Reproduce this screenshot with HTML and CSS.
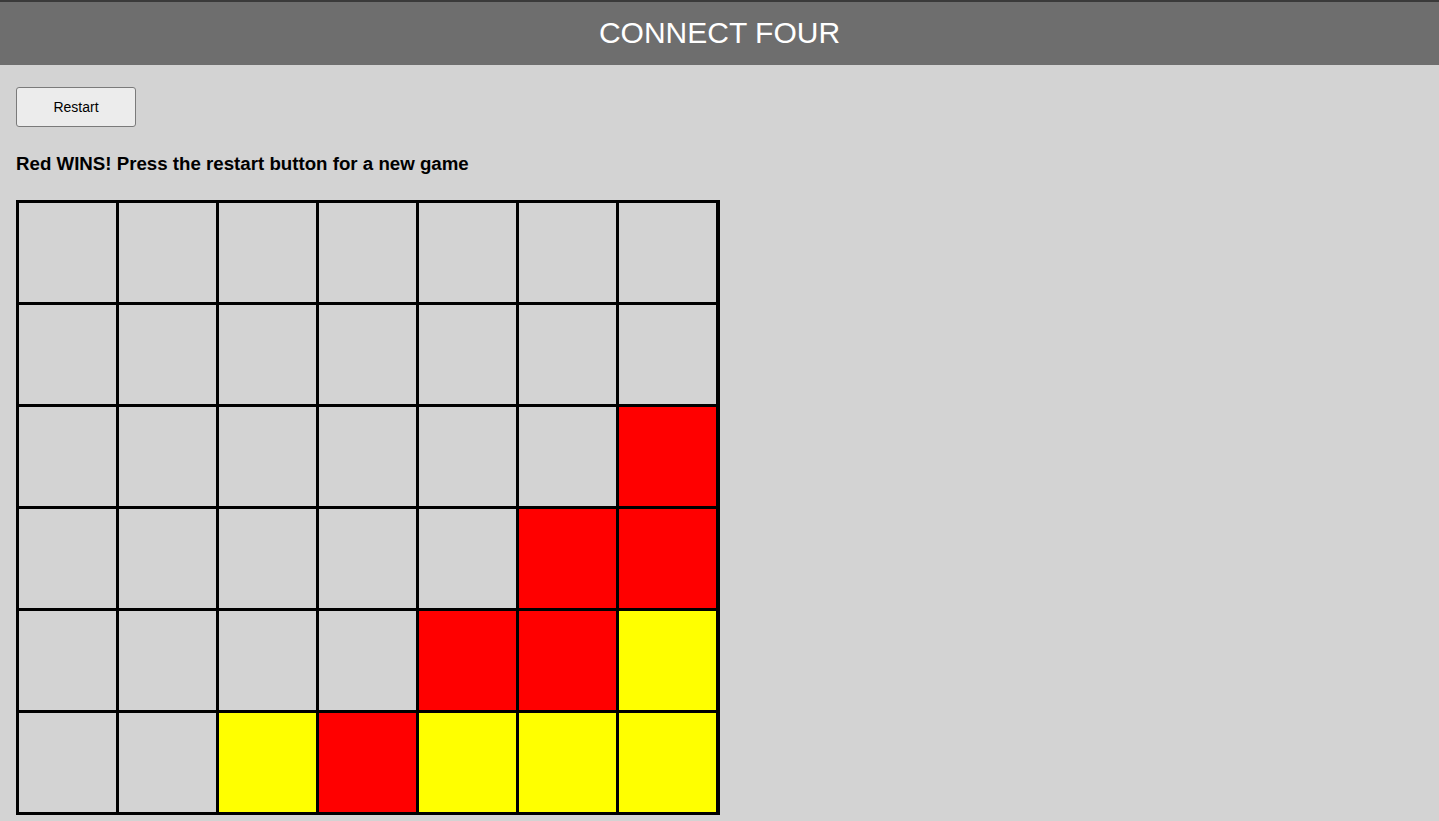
FILE: index.html
```html
<!DOCTYPE html>
<html>
<head>
<meta charset="utf-8">
<title>Connect Four</title>
<link rel="stylesheet" href="styles.css">
</head>
<body>
<header class="top">CONNECT FOUR</header>
<main class="content">
  <button class="restart">Restart</button>
  <p class="status">Red WINS! Press the restart button for a new game</p>
  <div class="board">
    <div class="cell"></div><div class="cell"></div><div class="cell"></div><div class="cell"></div><div class="cell"></div><div class="cell"></div><div class="cell"></div>
    <div class="cell"></div><div class="cell"></div><div class="cell"></div><div class="cell"></div><div class="cell"></div><div class="cell"></div><div class="cell"></div>
    <div class="cell"></div><div class="cell"></div><div class="cell"></div><div class="cell"></div><div class="cell"></div><div class="cell"></div><div class="cell red"></div>
    <div class="cell"></div><div class="cell"></div><div class="cell"></div><div class="cell"></div><div class="cell"></div><div class="cell red"></div><div class="cell red"></div>
    <div class="cell"></div><div class="cell"></div><div class="cell"></div><div class="cell"></div><div class="cell red"></div><div class="cell red"></div><div class="cell yellow"></div>
    <div class="cell"></div><div class="cell"></div><div class="cell yellow"></div><div class="cell red"></div><div class="cell yellow"></div><div class="cell yellow"></div><div class="cell yellow"></div>
  </div>
</main>
</body>
</html>
```
FILE: styles.css
```css
html, body {
  margin: 0;
  padding: 0;
}
body {
  background: #d3d3d3;
  font-family: "Liberation Sans", Arial, sans-serif;
  color: #000;
  overflow: hidden;
}
.top {
  height: 63px;
  background: #6e6e6e;
  border-top: 2px solid #3a3a3a;
  color: #fff;
  font-size: 30px;
  line-height: 1;
  padding-bottom: 2px;
  display: flex;
  align-items: center;
  justify-content: center;
  box-sizing: border-box;
  height: 65px;
}
.content {
  padding: 22px 16px 0 16px;
}
.restart {
  display: block;
  width: 120px;
  height: 40px;
  background: #ececec;
  border: 1px solid #7a7a7a;
  border-radius: 3px;
  font-family: "Liberation Sans", Arial, sans-serif;
  font-size: 14px;
  color: #000;
  padding: 0;
}
.status {
  margin: 25px 0 0 0;
  font-size: 18.7px;
  font-weight: bold;
  line-height: 24px;
}
.board {
  margin-top: 24px;
  display: grid;
  grid-template-columns: repeat(7, 97px);
  grid-template-rows: repeat(6, 99px);
  gap: 3px;
  padding: 3px 4px 3px 3px;
  background: #000;
  width: max-content;
}
.cell {
  background: #d3d3d3;
}
.cell.red {
  background: #ff0000;
}
.cell.yellow {
  background: #ffff00;
}
```
